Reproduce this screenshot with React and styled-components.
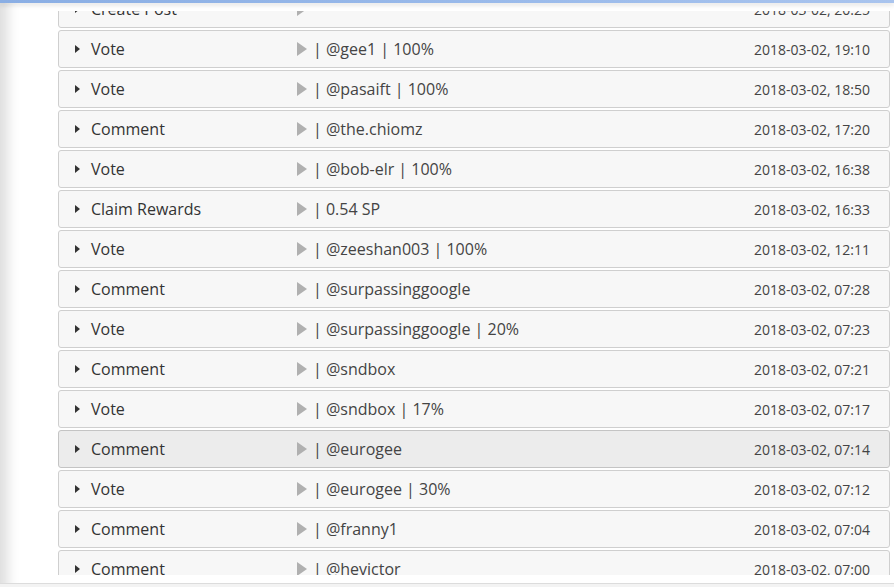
import React from 'react';
import styled, { createGlobalStyle } from 'styled-components';

const GlobalStyle = createGlobalStyle`
  html, body { margin: 0; padding: 0; background: #fff; }
  body { font-family: "Open Sans", "Liberation Sans", sans-serif; color: #333; }
  * { box-sizing: border-box; }
`;

const Page = styled.div`
  height: 587px;
  display: flex;
  flex-direction: column;
  overflow: hidden;
`;

const TopBar = styled.div`
  height: 3px;
  flex: none;
  background: linear-gradient(90deg, #8aaee4, #9bbbeb 60%, #a9c4ee);
  box-shadow: 0 2px 5px rgba(0, 0, 0, 0.14);
  position: relative;
  z-index: 2;
`;

const Body = styled.div`
  flex: 1;
  display: flex;
  flex-direction: column;
  box-shadow: inset 16px 0 12px -8px rgba(0, 0, 0, 0.13);
`;

const ScrollArea = styled.div`
  margin-top: 8px;
  height: 564px;
  overflow: hidden;
  padding: 0 4px 0 58px;
`;

const List = styled.div`
  margin-top: -21px;
  display: flex;
  flex-direction: column;
  gap: 2px;
`;

const Row = styled.div`
  height: 38px;
  display: grid;
  grid-template-columns: 5px 217px 10px 1fr auto;
  align-items: center;
  padding: 0 19px 0 16px;
  border: 1px solid ${p => (p.$active ? '#c4c4c4' : '#cfcfcf')};
  border-radius: 3px;
  background: ${p => (p.$active ? '#ececec' : '#f7f7f7')};
`;

const Caret = styled.span`
  width: 0;
  height: 0;
  border-top: 4px solid transparent;
  border-bottom: 4px solid transparent;
  border-left: 5px solid #333;
`;

const Title = styled.span`
  font-size: 16px;
  padding-left: 11px;
  color: #333;
  white-space: nowrap;
`;

const Play = styled.span`
  width: 0;
  height: 0;
  border-top: 7px solid transparent;
  border-bottom: 7px solid transparent;
  border-left: 10px solid #b0b0b0;
`;

const Detail = styled.span`
  font-size: 16px;
  padding-left: 6px;
  color: #444;
  white-space: nowrap;
`;

const Stamp = styled.span`
  font-size: 14px;
  color: #444;
  white-space: nowrap;
`;

const Footer = styled.div`
  flex: 1;
  margin-top: 8px;
  border-top: 1px solid #dcdcdc;
  background: #f3f3f3;
`;

const ops = [
  ['Create Post', '', '2018-03-02, 20:25'],
  ['Vote', '| @gee1 | 100%', '2018-03-02, 19:10'],
  ['Vote', '| @pasaift | 100%', '2018-03-02, 18:50'],
  ['Comment', '| @the.chiomz', '2018-03-02, 17:20'],
  ['Vote', '| @bob-elr | 100%', '2018-03-02, 16:38'],
  ['Claim Rewards', '| 0.54 SP', '2018-03-02, 16:33'],
  ['Vote', '| @zeeshan003 | 100%', '2018-03-02, 12:11'],
  ['Comment', '| @surpassinggoogle', '2018-03-02, 07:28'],
  ['Vote', '| @surpassinggoogle | 20%', '2018-03-02, 07:23'],
  ['Comment', '| @sndbox', '2018-03-02, 07:21'],
  ['Vote', '| @sndbox | 17%', '2018-03-02, 07:17'],
  ['Comment', '| @eurogee', '2018-03-02, 07:14'],
  ['Vote', '| @eurogee | 30%', '2018-03-02, 07:12'],
  ['Comment', '| @franny1', '2018-03-02, 07:04'],
  ['Comment', '| @hevictor', '2018-03-02, 07:00'],
];

export default function App() {
  return (
    <Page>
      <GlobalStyle />
      <TopBar />
      <Body>
        <ScrollArea>
          <List>
            {ops.map(([title, detail, date], i) => (
              <Row key={i} $active={i === 11}>
                <Caret />
                <Title>{title}</Title>
                <Play />
                <Detail>{detail}</Detail>
                <Stamp>{date}</Stamp>
              </Row>
            ))}
          </List>
        </ScrollArea>
        <Footer />
      </Body>
    </Page>
  );
}
